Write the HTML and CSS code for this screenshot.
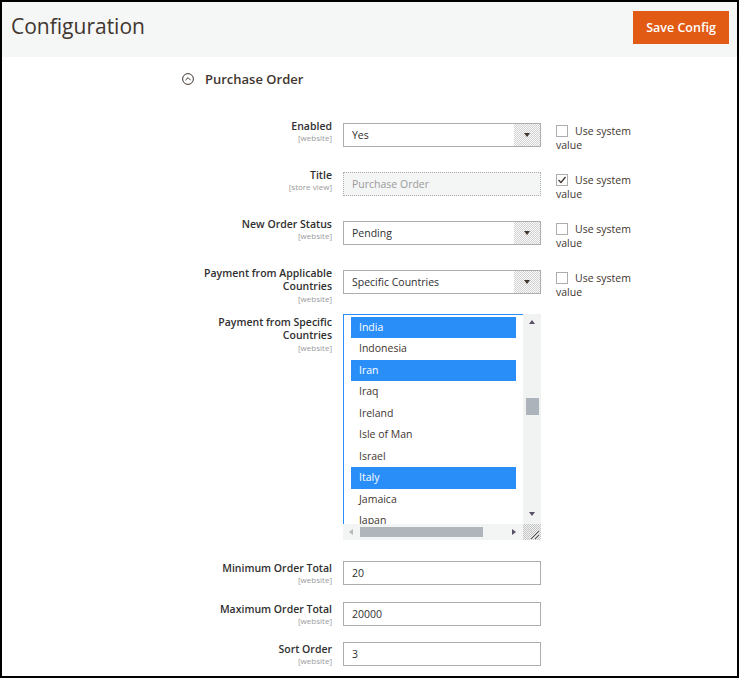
FILE: index.html
```html
<!DOCTYPE html>
<html>
<head>
<meta charset="utf-8">
<link rel="stylesheet" href="styles.css">
</head>
<body>
<div class="frame">
  <header class="header">
    <h1 class="page-title">Configuration</h1>
    <button class="save-btn">Save Config</button>
  </header>
  <div class="section-title">
    <span class="toggle-icon"><svg width="12" height="12" viewBox="0 0 12 12"><circle cx="6" cy="6" r="5.4" fill="none" stroke="#41362f" stroke-width="1"/><path d="M3.4 7.2 L6 4.6 L8.6 7.2" fill="none" stroke="#41362f" stroke-width="1"/></svg></span>
    <span>Purchase Order</span>
  </div>
  <div class="rows">
    <div class="row std">
      <div class="label"><div class="lbl">Enabled</div><div class="scope">[website]</div></div>
      <div class="control"><div class="select"><span>Yes</span><span class="arrow"></span></div></div>
      <div class="sys"><span class="cb"></span>Use system value</div>
    </div>
    <div class="row std">
      <div class="label"><div class="lbl">Title</div><div class="scope">[store view]</div></div>
      <div class="control"><div class="input disabled">Purchase Order</div></div>
      <div class="sys"><span class="cb checked"><svg width="10" height="10" viewBox="0 0 10 10"><path d="M1.5 5 L4 7.5 L8.5 2" fill="none" stroke="#41362f" stroke-width="1.3"/></svg></span>Use system value</div>
    </div>
    <div class="row std">
      <div class="label"><div class="lbl">New Order Status</div><div class="scope">[website]</div></div>
      <div class="control"><div class="select"><span>Pending</span><span class="arrow"></span></div></div>
      <div class="sys"><span class="cb"></span>Use system value</div>
    </div>
    <div class="row std">
      <div class="label"><div class="lbl">Payment from Applicable Countries</div><div class="scope">[website]</div></div>
      <div class="control"><div class="select"><span>Specific Countries</span><span class="arrow"></span></div></div>
      <div class="sys"><span class="cb"></span>Use system value</div>
    </div>
    <div class="row multi">
      <div class="label"><div class="lbl">Payment from Specific Countries</div><div class="scope">[website]</div></div>
      <div class="control ms-control">
        <div class="ms">
          <div class="ms-list">
            <div class="opt sel">India</div>
            <div class="opt">Indonesia</div>
            <div class="opt sel">Iran</div>
            <div class="opt">Iraq</div>
            <div class="opt">Ireland</div>
            <div class="opt">Isle of Man</div>
            <div class="opt">Israel</div>
            <div class="opt sel">Italy</div>
            <div class="opt">Jamaica</div>
            <div class="opt">Japan</div>
          </div>
          <div class="vscroll">
            <span class="tri up"></span>
            <span class="vthumb"></span>
            <span class="tri down"></span>
          </div>
          <div class="hscroll">
            <span class="tri left"></span>
            <span class="hthumb"></span>
            <span class="tri right"></span>
          </div>
          <div class="corner"><svg width="18" height="16" viewBox="0 0 18 16"><path d="M16 7 L8 15 M16 11 L12 15" stroke="#555" stroke-width="1"/></svg></div>
        </div>
      </div>
    </div>
    <div class="row low">
      <div class="label"><div class="lbl">Minimum Order Total</div><div class="scope">[website]</div></div>
      <div class="control"><div class="input">20</div></div>
    </div>
    <div class="row low">
      <div class="label"><div class="lbl">Maximum Order Total</div><div class="scope">[website]</div></div>
      <div class="control"><div class="input">20000</div></div>
    </div>
    <div class="row low">
      <div class="label"><div class="lbl">Sort Order</div><div class="scope">[website]</div></div>
      <div class="control"><div class="input">3</div></div>
    </div>
  </div>
</div>
</body>
</html>
```
FILE: styles.css
```css
html, body {
  margin: 0;
  padding: 0;
  background: #fff;
}
body {
  font-family: "Open Sans", "Liberation Sans", sans-serif;
  color: #303030;
}
.frame {
  box-sizing: border-box;
  width: 739px;
  height: 678px;
  border: 2px solid #000;
  overflow: hidden;
}
.header {
  height: 55px;
  background: #f5f6f6;
  display: flex;
  justify-content: space-between;
  align-items: flex-start;
  padding: 8px 8px 0 9px;
  box-sizing: border-box;
}
.page-title {
  margin: 0;
  font-size: 21px;
  font-weight: 400;
  line-height: 32px;
  color: #41362f;
}
.save-btn {
  margin-top: 1px;
  width: 96px;
  height: 33px;
  border: 0;
  background: #e25b14;
  color: #fff;
  font-family: "Open Sans", "Liberation Sans", sans-serif;
  font-size: 12.5px;
  font-weight: 600;
  padding: 0;
}
.section-title {
  margin-top: 13px;
  padding-left: 180px;
  display: flex;
  align-items: center;
  gap: 11px;
  height: 18px;
  font-size: 13px;
  font-weight: 600;
  color: #41362f;
}
.toggle-icon {
  display: flex;
  width: 12px;
  height: 12px;
}
.rows {
  margin-top: 31px;
}
.row {
  display: grid;
  grid-template-columns: 330px 198px 80px;
  column-gap: 11px;
  align-items: start;
}
.row.std { height: 49px; }
.row.multi { height: 246px; }
.row.low { height: 40.5px; }
.label {
  text-align: right;
  padding-top: 1px;
}
.lbl {
  max-width: 132px;
  margin-left: auto;
  font-size: 10.5px;
  font-weight: 600;
  line-height: 13.4px;
  color: #303030;
}
.scope {
  font-size: 8px;
  line-height: 10px;
  color: #9a9a9a;
}
.control {
  margin-top: 4px;
}
.row.low .control { margin-top: 0; }
.ms-control { margin-top: -1px; }
.select, .input {
  box-sizing: border-box;
  height: 24px;
  border: 1px solid #adadad;
  font-size: 10.5px;
  line-height: 22px;
  padding-left: 8px;
  position: relative;
  background: #fff;
}
.input.disabled {
  background: #f4f5f5;
  border-style: dotted;
  color: #9a9a9a;
}
.arrow {
  position: absolute;
  top: 0;
  right: 0;
  width: 26px;
  height: 22px;
  background: repeating-conic-gradient(#d2d2d2 0 25%, #fafafa 0 50%) 0 0 / 2px 2px;
}
.arrow::after {
  content: "";
  position: absolute;
  left: 10px;
  top: 9px;
  border-left: 3px solid transparent;
  border-right: 3px solid transparent;
  border-top: 4px solid #41362f;
}
.sys {
  margin-top: 6px;
  margin-left: 4px;
  width: 78px;
  font-size: 10.5px;
  line-height: 13.5px;
  color: #41362f;
}
.cb {
  display: inline-block;
  box-sizing: border-box;
  width: 12px;
  height: 12px;
  border: 1px solid #adadad;
  vertical-align: -2px;
  margin-right: 7px;
  position: relative;
}
.cb svg {
  position: absolute;
  left: 0;
  top: 0;
}
.ms {
  width: 198px;
  height: 226px;
  display: grid;
  grid-template-columns: 180px 18px;
  grid-template-rows: 210px 16px;
}
.ms-list {
  box-sizing: border-box;
  border-left: 1px solid #2a8ef8;
  border-top: 1px solid #2a8ef8;
  padding: 2px 7px 0 7px;
  overflow: hidden;
  background: #fff;
}
.opt {
  height: 21.45px;
  line-height: 21.45px;
  padding-left: 8px;
  font-size: 10.5px;
  color: #41362f;
}
.opt.sel {
  background: #2a8ef8;
  color: #fff;
}
.vscroll {
  background: #f1f2f2;
  position: relative;
}
.vthumb {
  position: absolute;
  left: 3px;
  top: 84px;
  width: 13px;
  height: 17px;
  background: #adb3bb;
}
.tri {
  position: absolute;
  width: 0;
  height: 0;
}
.tri.up {
  left: 6px;
  top: 6px;
  border-left: 3.5px solid transparent;
  border-right: 3.5px solid transparent;
  border-bottom: 4px solid #5a5066;
}
.tri.down {
  left: 6px;
  bottom: 8px;
  border-left: 3.5px solid transparent;
  border-right: 3.5px solid transparent;
  border-top: 4px solid #5a5066;
}
.hscroll {
  background: #f3f4f4;
  position: relative;
}
.hthumb {
  position: absolute;
  left: 17px;
  top: 3px;
  width: 123px;
  height: 10px;
  background: #b0b4bb;
}
.tri.left {
  left: 6px;
  top: 4.5px;
  border-top: 3.5px solid transparent;
  border-bottom: 3.5px solid transparent;
  border-right: 4px solid #b7b7b7;
}
.tri.right {
  left: 169px;
  top: 4.5px;
  border-top: 3.5px solid transparent;
  border-bottom: 3.5px solid transparent;
  border-left: 4px solid #5a5066;
}
.corner {
  background: repeating-conic-gradient(#c4c4c4 0 25%, #f2f2f2 0 50%) 0 0 / 2px 2px;
}
.corner svg { display: block; }
```
